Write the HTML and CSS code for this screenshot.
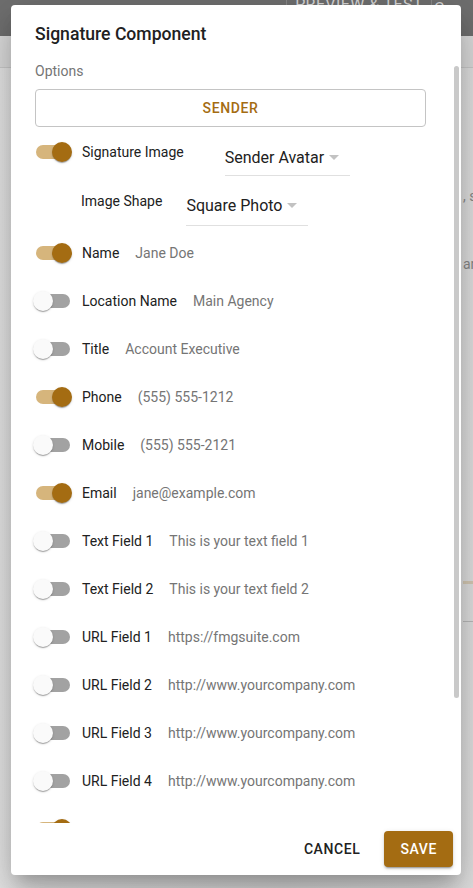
FILE: index.html
```html
<!DOCTYPE html>
<html lang="en">
<head>
  <meta charset="utf-8" />
  <meta name="viewport" content="width=device-width, initial-scale=1" />
  <title>Signature Component</title>
  <link rel="stylesheet" href="styles.css">
</head>
<body>
  <div class="page">
    <div class="topbar">
      <div class="tab">PREVIEW &amp; TEST</div>
      <div class="tab tab-c">C</div>
    </div>
    <div class="subbar"></div>
    <div class="page-body">
      <span class="bg-text t1">, s</span>
      <span class="bg-text t2">ar</span>
      <div class="bg-line l1"></div>
      <div class="bg-line l2"></div>
    </div>
  </div>

  <div class="dialog">
    <h2 class="dialog-title">Signature Component</h2>
    <div class="dialog-content">
      <div class="section-label">Options</div>
      <button class="btn-outline">SENDER</button>

      <div class="row">
        <span class="switch on"><span class="track"></span><span class="thumb"></span></span>
        <span class="label">Signature Image</span>
        <span class="select select-avatar"><span>Sender Avatar</span><i class="caret"></i></span>
      </div>
      <div class="row row-sub">
        <span class="label">Image Shape</span>
        <span class="select select-shape"><span>Square Photo</span><i class="caret"></i></span>
      </div>

      <div class="row">
        <span class="switch on"><span class="track"></span><span class="thumb"></span></span>
        <span class="label">Name</span><span class="value">Jane Doe</span>
      </div>
      <div class="row">
        <span class="switch"><span class="track"></span><span class="thumb"></span></span>
        <span class="label">Location Name</span><span class="value">Main Agency</span>
      </div>
      <div class="row">
        <span class="switch"><span class="track"></span><span class="thumb"></span></span>
        <span class="label">Title</span><span class="value">Account Executive</span>
      </div>
      <div class="row">
        <span class="switch on"><span class="track"></span><span class="thumb"></span></span>
        <span class="label">Phone</span><span class="value">(555) 555-1212</span>
      </div>
      <div class="row">
        <span class="switch"><span class="track"></span><span class="thumb"></span></span>
        <span class="label">Mobile</span><span class="value">(555) 555-2121</span>
      </div>
      <div class="row">
        <span class="switch on"><span class="track"></span><span class="thumb"></span></span>
        <span class="label">Email</span><span class="value">jane@example.com</span>
      </div>
      <div class="row">
        <span class="switch"><span class="track"></span><span class="thumb"></span></span>
        <span class="label">Text Field 1</span><span class="value">This is your text field 1</span>
      </div>
      <div class="row">
        <span class="switch"><span class="track"></span><span class="thumb"></span></span>
        <span class="label">Text Field 2</span><span class="value">This is your text field 2</span>
      </div>
      <div class="row">
        <span class="switch"><span class="track"></span><span class="thumb"></span></span>
        <span class="label">URL Field 1</span><span class="value">https://fmgsuite.com</span>
      </div>
      <div class="row">
        <span class="switch"><span class="track"></span><span class="thumb"></span></span>
        <span class="label">URL Field 2</span><span class="value">http://www.yourcompany.com</span>
      </div>
      <div class="row">
        <span class="switch"><span class="track"></span><span class="thumb"></span></span>
        <span class="label">URL Field 3</span><span class="value">http://www.yourcompany.com</span>
      </div>
      <div class="row">
        <span class="switch"><span class="track"></span><span class="thumb"></span></span>
        <span class="label">URL Field 4</span><span class="value">http://www.yourcompany.com</span>
      </div>
      <div class="row">
        <span class="switch on"><span class="track"></span><span class="thumb"></span></span>
        <span class="label">Disclaimer</span><span class="value">Securities offered through</span>
      </div>
    </div>
    <div class="scroll-thumb"></div>
    <div class="dialog-actions">
      <button class="btn-text">CANCEL</button>
      <button class="btn-save">SAVE</button>
    </div>
  </div>
</body>
</html>
```

FILE: styles.css
```css
:root{
  --gold:#a46c12;
  --gold-light:#d6b57c;
  --text:#212121;
  --muted:#757575;
  --line:#e0e0e0;
}

* { box-sizing: border-box; }
html, body { height:100%; }

body{
  margin:0; overflow:hidden;
  font-family: Roboto, "Noto Sans", Arial, sans-serif;
  color:var(--text);
  background:#e2e2e2;
}

/* dimmed page behind the dialog */
.page{ height:100%; display:flex; flex-direction:column; }
.topbar{ height:36px; background:#707070; display:flex; justify-content:flex-end; align-items:flex-start; }
.tab{
  height:36px; color:#d8d8d8; font-size:16px; letter-spacing:.4px; white-space:nowrap;
  line-height:10px; border-left:1px solid #8a8a8a; width:145px; text-align:center;
}
.tab-c{ width:42px; padding:0 0 0 2px; text-align:left; line-height:18px; }
.subbar{ height:32px; background:#dedede; border-bottom:1px solid #cdcdcd; }
.page-body{ flex:1; position:relative; background:linear-gradient(90deg,#e8e8e8,#dcdcdc 60%,#e4e4e4); }
.bg-text{ position:absolute; left:463px; color:#8a8a8a; font-size:14px; white-space:nowrap; }
.t1{ top:120px; }
.t2{ top:188px; }
.bg-line{ position:absolute; left:463px; right:0; height:1px; background:#bdbdbd; }
.l1{ top:513px; height:3px; background:#d9cdb8; }
.l2{ top:553px; }

/* dialog */
.dialog{
  position:absolute; left:11px; top:5px; width:450px; height:870px;
  background:#fff; border-radius:4px;
  display:flex; flex-direction:column;
  box-shadow: 0 11px 15px -7px rgba(0,0,0,.2), 0 24px 38px 3px rgba(0,0,0,.14), 0 9px 46px 8px rgba(0,0,0,.12);
}
.dialog-title{
  margin:0; padding:17px 24px 0; font-size:17.6px; line-height:24px; font-weight:500; color:#212121;
}
.dialog-content{ flex:1; overflow:hidden; padding:0 35px 0 24px; }
.section-label{ margin-top:15px; font-size:14px; line-height:20px; color:var(--muted); }
.btn-outline{
  display:block; width:100%; height:38px; margin-top:8px; margin-bottom:1px;
  border:1px solid #c4c4c4; border-radius:4px; background:#fff;
  color:var(--gold); font:500 14px/1 Roboto, sans-serif; letter-spacing:.6px;
}

.row{ display:flex; align-items:center; height:48px; font-size:14px; }
.label{ color:var(--text); margin-right:16px; white-space:nowrap; }
.value{ color:var(--muted); white-space:nowrap; }

.switch{ position:relative; width:37px; height:20px; margin-right:10px; flex:none; }
.track{ position:absolute; left:1px; top:3px; width:34px; height:14px; border-radius:7px; background:#a2a2a2; }
.thumb{
  position:absolute; left:-2px; top:0; width:20px; height:20px; border-radius:50%;
  background:#fafafa; box-shadow:0 2px 1px -1px rgba(0,0,0,.2), 0 1px 1px rgba(0,0,0,.14), 0 1px 3px rgba(0,0,0,.12);
}
.switch.on .track{ background:var(--gold-light); }
.switch.on .thumb{ left:17px; background:var(--gold); }

.select{
  display:flex; align-items:center; justify-content:space-between;
  font-size:16px; color:var(--text); border-bottom:1px solid var(--line);
  padding:9px 0 8px; margin-top:10px;
}
.select-avatar{ width:125px; margin-left:25px; }
.select-shape{ width:122px; margin-left:24px; }
.caret{ width:0; height:0; border-left:5px solid transparent; border-right:5px solid transparent; border-top:5px solid #c2c2c2; margin-right:11px; }
.row-sub{ height:53px; padding-left:46px; align-items:flex-start; padding-top:17px; }
.row-sub .select{ margin-top:-6px; padding-bottom:10px; }
.row-sub .label{ margin-right:0; }

.scroll-thumb{ position:absolute; left:443px; top:61px; width:5px; height:632px; border-radius:3px; background:#c9c9c9; }

.dialog-actions{ display:flex; justify-content:flex-end; align-items:center; gap:8px; padding:8px; }
.btn-text, .btn-save{
  height:36px; padding:0 16px; border:0; border-radius:4px;
  font:500 14px/36px Roboto, sans-serif; letter-spacing:.6px;
}
.btn-text{ background:transparent; color:#212121; }
.btn-save{ background:var(--gold); color:#fff; box-shadow:0 3px 1px -2px rgba(0,0,0,.2), 0 2px 2px rgba(0,0,0,.14), 0 1px 5px rgba(0,0,0,.12); }
```
